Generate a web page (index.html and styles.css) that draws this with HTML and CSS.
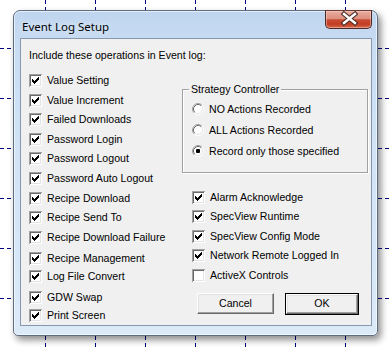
FILE: index.html
```html
<!DOCTYPE html>
<html>
<head>
<meta charset="utf-8">
<title>Event Log Setup</title>
<link rel="stylesheet" href="styles.css">
</head>
<body>
<div class="desk">
  <svg class="grid" width="392" height="347" viewBox="0 0 392 347">
    <g stroke="#000080" stroke-width="1" stroke-dasharray="4 3">
      <path d="M45.5 0V347M95.5 0V347M145.5 0V347M195.5 0V347M245.5 0V347M295.5 0V347M345.5 0V347"/>
      <path d="M0 48.5H392M0 98.5H392M0 148.5H392M0 198.5H392M0 248.5H392M0 298.5H392"/>
    </g>
  </svg>

  <div class="window">
    <div class="titlebar">
      <span class="title">Event Log Setup</span>
      <span class="close">
        <svg width="47" height="19" viewBox="0 0 47 19">
          <path d="M19 4L30 13M30 4L19 13" stroke="#4a2a24" stroke-width="4.6" stroke-linecap="square"/>
          <path d="M19 4L30 13M30 4L19 13" stroke="#ffffff" stroke-width="2.4" stroke-linecap="square"/>
        </svg>
      </span>
    </div>

    <div class="client">
      <div class="intro">Include these operations in Event log:</div>
      <div class="cols">
        <div class="col-left">
          <div class="row h20">
            <svg class="cb" width="13" height="13" viewBox="0 0 13 13"><rect width="13" height="13" fill="#fff"/><path d="M0 0h13v1H1v12H0z" fill="#a0a0a0"/><path d="M1 1h11v1H2v10H1z" fill="#696969"/><path d="M11 2h1v10H2v-1h9z" fill="#e3e3e3"/><path d="M9 3h1v1h-1zM8 4h2v1h-2zM3 5h1v1h-1zM7 5h3v1h-3zM3 6h2v1h-2zM6 6h3v1h-3zM3 7h5v1h-5zM4 8h3v1h-3zM5 9h1v1h-1z" fill="#000"/></svg>
            <span>Value Setting</span>
          </div>
          <div class="row h19">
            <svg class="cb" width="13" height="13" viewBox="0 0 13 13"><rect width="13" height="13" fill="#fff"/><path d="M0 0h13v1H1v12H0z" fill="#a0a0a0"/><path d="M1 1h11v1H2v10H1z" fill="#696969"/><path d="M11 2h1v10H2v-1h9z" fill="#e3e3e3"/><path d="M9 3h1v1h-1zM8 4h2v1h-2zM3 5h1v1h-1zM7 5h3v1h-3zM3 6h2v1h-2zM6 6h3v1h-3zM3 7h5v1h-5zM4 8h3v1h-3zM5 9h1v1h-1z" fill="#000"/></svg>
            <span>Value Increment</span>
          </div>
          <div class="row h20">
            <svg class="cb" width="13" height="13" viewBox="0 0 13 13"><rect width="13" height="13" fill="#fff"/><path d="M0 0h13v1H1v12H0z" fill="#a0a0a0"/><path d="M1 1h11v1H2v10H1z" fill="#696969"/><path d="M11 2h1v10H2v-1h9z" fill="#e3e3e3"/><path d="M9 3h1v1h-1zM8 4h2v1h-2zM3 5h1v1h-1zM7 5h3v1h-3zM3 6h2v1h-2zM6 6h3v1h-3zM3 7h5v1h-5zM4 8h3v1h-3zM5 9h1v1h-1z" fill="#000"/></svg>
            <span>Failed Downloads</span>
          </div>
          <div class="row h19">
            <svg class="cb" width="13" height="13" viewBox="0 0 13 13"><rect width="13" height="13" fill="#fff"/><path d="M0 0h13v1H1v12H0z" fill="#a0a0a0"/><path d="M1 1h11v1H2v10H1z" fill="#696969"/><path d="M11 2h1v10H2v-1h9z" fill="#e3e3e3"/><path d="M9 3h1v1h-1zM8 4h2v1h-2zM3 5h1v1h-1zM7 5h3v1h-3zM3 6h2v1h-2zM6 6h3v1h-3zM3 7h5v1h-5zM4 8h3v1h-3zM5 9h1v1h-1z" fill="#000"/></svg>
            <span>Password Login</span>
          </div>
          <div class="row h20">
            <svg class="cb" width="13" height="13" viewBox="0 0 13 13"><rect width="13" height="13" fill="#fff"/><path d="M0 0h13v1H1v12H0z" fill="#a0a0a0"/><path d="M1 1h11v1H2v10H1z" fill="#696969"/><path d="M11 2h1v10H2v-1h9z" fill="#e3e3e3"/><path d="M9 3h1v1h-1zM8 4h2v1h-2zM3 5h1v1h-1zM7 5h3v1h-3zM3 6h2v1h-2zM6 6h3v1h-3zM3 7h5v1h-5zM4 8h3v1h-3zM5 9h1v1h-1z" fill="#000"/></svg>
            <span>Password Logout</span>
          </div>
          <div class="row h20">
            <svg class="cb" width="13" height="13" viewBox="0 0 13 13"><rect width="13" height="13" fill="#fff"/><path d="M0 0h13v1H1v12H0z" fill="#a0a0a0"/><path d="M1 1h11v1H2v10H1z" fill="#696969"/><path d="M11 2h1v10H2v-1h9z" fill="#e3e3e3"/><path d="M9 3h1v1h-1zM8 4h2v1h-2zM3 5h1v1h-1zM7 5h3v1h-3zM3 6h2v1h-2zM6 6h3v1h-3zM3 7h5v1h-5zM4 8h3v1h-3zM5 9h1v1h-1z" fill="#000"/></svg>
            <span>Password Auto Logout</span>
          </div>
          <div class="row h19">
            <svg class="cb" width="13" height="13" viewBox="0 0 13 13"><rect width="13" height="13" fill="#fff"/><path d="M0 0h13v1H1v12H0z" fill="#a0a0a0"/><path d="M1 1h11v1H2v10H1z" fill="#696969"/><path d="M11 2h1v10H2v-1h9z" fill="#e3e3e3"/><path d="M9 3h1v1h-1zM8 4h2v1h-2zM3 5h1v1h-1zM7 5h3v1h-3zM3 6h2v1h-2zM6 6h3v1h-3zM3 7h5v1h-5zM4 8h3v1h-3zM5 9h1v1h-1z" fill="#000"/></svg>
            <span>Recipe Download</span>
          </div>
          <div class="row h20">
            <svg class="cb" width="13" height="13" viewBox="0 0 13 13"><rect width="13" height="13" fill="#fff"/><path d="M0 0h13v1H1v12H0z" fill="#a0a0a0"/><path d="M1 1h11v1H2v10H1z" fill="#696969"/><path d="M11 2h1v10H2v-1h9z" fill="#e3e3e3"/><path d="M9 3h1v1h-1zM8 4h2v1h-2zM3 5h1v1h-1zM7 5h3v1h-3zM3 6h2v1h-2zM6 6h3v1h-3zM3 7h5v1h-5zM4 8h3v1h-3zM5 9h1v1h-1z" fill="#000"/></svg>
            <span>Recipe Send To</span>
          </div>
          <div class="row h21">
            <svg class="cb" width="13" height="13" viewBox="0 0 13 13"><rect width="13" height="13" fill="#fff"/><path d="M0 0h13v1H1v12H0z" fill="#a0a0a0"/><path d="M1 1h11v1H2v10H1z" fill="#696969"/><path d="M11 2h1v10H2v-1h9z" fill="#e3e3e3"/><path d="M9 3h1v1h-1zM8 4h2v1h-2zM3 5h1v1h-1zM7 5h3v1h-3zM3 6h2v1h-2zM6 6h3v1h-3zM3 7h5v1h-5zM4 8h3v1h-3zM5 9h1v1h-1z" fill="#000"/></svg>
            <span>Recipe Download Failure</span>
          </div>
          <div class="row h18">
            <svg class="cb" width="13" height="13" viewBox="0 0 13 13"><rect width="13" height="13" fill="#fff"/><path d="M0 0h13v1H1v12H0z" fill="#a0a0a0"/><path d="M1 1h11v1H2v10H1z" fill="#696969"/><path d="M11 2h1v10H2v-1h9z" fill="#e3e3e3"/><path d="M9 3h1v1h-1zM8 4h2v1h-2zM3 5h1v1h-1zM7 5h3v1h-3zM3 6h2v1h-2zM6 6h3v1h-3zM3 7h5v1h-5zM4 8h3v1h-3zM5 9h1v1h-1z" fill="#000"/></svg>
            <span>Recipe Management</span>
          </div>
          <div class="row h21">
            <svg class="cb" width="13" height="13" viewBox="0 0 13 13"><rect width="13" height="13" fill="#fff"/><path d="M0 0h13v1H1v12H0z" fill="#a0a0a0"/><path d="M1 1h11v1H2v10H1z" fill="#696969"/><path d="M11 2h1v10H2v-1h9z" fill="#e3e3e3"/><path d="M9 3h1v1h-1zM8 4h2v1h-2zM3 5h1v1h-1zM7 5h3v1h-3zM3 6h2v1h-2zM6 6h3v1h-3zM3 7h5v1h-5zM4 8h3v1h-3zM5 9h1v1h-1z" fill="#000"/></svg>
            <span>Log File Convert</span>
          </div>
          <div class="row h18">
            <svg class="cb" width="13" height="13" viewBox="0 0 13 13"><rect width="13" height="13" fill="#fff"/><path d="M0 0h13v1H1v12H0z" fill="#a0a0a0"/><path d="M1 1h11v1H2v10H1z" fill="#696969"/><path d="M11 2h1v10H2v-1h9z" fill="#e3e3e3"/><path d="M9 3h1v1h-1zM8 4h2v1h-2zM3 5h1v1h-1zM7 5h3v1h-3zM3 6h2v1h-2zM6 6h3v1h-3zM3 7h5v1h-5zM4 8h3v1h-3zM5 9h1v1h-1z" fill="#000"/></svg>
            <span>GDW Swap</span>
          </div>
          <div class="row last">
            <svg class="cb" width="13" height="13" viewBox="0 0 13 13"><rect width="13" height="13" fill="#fff"/><path d="M0 0h13v1H1v12H0z" fill="#a0a0a0"/><path d="M1 1h11v1H2v10H1z" fill="#696969"/><path d="M11 2h1v10H2v-1h9z" fill="#e3e3e3"/><path d="M9 3h1v1h-1zM8 4h2v1h-2zM3 5h1v1h-1zM7 5h3v1h-3zM3 6h2v1h-2zM6 6h3v1h-3zM3 7h5v1h-5zM4 8h3v1h-3zM5 9h1v1h-1z" fill="#000"/></svg>
            <span>Print Screen</span>
          </div>
        </div>

        <div class="col-right">
          <div class="group">
            <div class="legend"><span>Strategy Controller</span></div>
            <div class="radios">
              <div class="row rr21">
                <svg class="rb" width="12" height="12" viewBox="0 0 12 12"><circle cx="6" cy="6" r="5" fill="#fff"/><path d="M2.11 9.89A5.5 5.5 0 0 1 9.89 2.11" fill="none" stroke="#a0a0a0"/><path d="M9.89 2.11A5.5 5.5 0 0 1 2.11 9.89" fill="none" stroke="#fff"/><path d="M2.82 9.18A4.5 4.5 0 0 1 9.18 2.82" fill="none" stroke="#696969"/><path d="M9.18 2.82A4.5 4.5 0 0 1 2.82 9.18" fill="none" stroke="#e3e3e3"/></svg>
                <span>NO Actions Recorded</span>
              </div>
              <div class="row rr21">
                <svg class="rb" width="12" height="12" viewBox="0 0 12 12"><circle cx="6" cy="6" r="5" fill="#fff"/><path d="M2.11 9.89A5.5 5.5 0 0 1 9.89 2.11" fill="none" stroke="#a0a0a0"/><path d="M9.89 2.11A5.5 5.5 0 0 1 2.11 9.89" fill="none" stroke="#fff"/><path d="M2.82 9.18A4.5 4.5 0 0 1 9.18 2.82" fill="none" stroke="#696969"/><path d="M9.18 2.82A4.5 4.5 0 0 1 2.82 9.18" fill="none" stroke="#e3e3e3"/></svg>
                <span>ALL Actions Recorded</span>
              </div>
              <div class="row rlast">
                <svg class="rb" width="12" height="12" viewBox="0 0 12 12"><circle cx="6" cy="6" r="5" fill="#fff"/><path d="M2.11 9.89A5.5 5.5 0 0 1 9.89 2.11" fill="none" stroke="#a0a0a0"/><path d="M9.89 2.11A5.5 5.5 0 0 1 2.11 9.89" fill="none" stroke="#fff"/><path d="M2.82 9.18A4.5 4.5 0 0 1 9.18 2.82" fill="none" stroke="#696969"/><path d="M9.18 2.82A4.5 4.5 0 0 1 2.82 9.18" fill="none" stroke="#e3e3e3"/><rect x="4" y="4" width="4" height="4" rx="1" fill="#000"/></svg>
                <span>Record only those specified</span>
              </div>
            </div>
          </div>

          <div class="checks">
            <div class="row h19">
              <svg class="cb" width="13" height="13" viewBox="0 0 13 13"><rect width="13" height="13" fill="#fff"/><path d="M0 0h13v1H1v12H0z" fill="#a0a0a0"/><path d="M1 1h11v1H2v10H1z" fill="#696969"/><path d="M11 2h1v10H2v-1h9z" fill="#e3e3e3"/><path d="M9 3h1v1h-1zM8 4h2v1h-2zM3 5h1v1h-1zM7 5h3v1h-3zM3 6h2v1h-2zM6 6h3v1h-3zM3 7h5v1h-5zM4 8h3v1h-3zM5 9h1v1h-1z" fill="#000"/></svg>
              <span>Alarm Acknowledge</span>
            </div>
            <div class="row h20">
              <svg class="cb" width="13" height="13" viewBox="0 0 13 13"><rect width="13" height="13" fill="#fff"/><path d="M0 0h13v1H1v12H0z" fill="#a0a0a0"/><path d="M1 1h11v1H2v10H1z" fill="#696969"/><path d="M11 2h1v10H2v-1h9z" fill="#e3e3e3"/><path d="M9 3h1v1h-1zM8 4h2v1h-2zM3 5h1v1h-1zM7 5h3v1h-3zM3 6h2v1h-2zM6 6h3v1h-3zM3 7h5v1h-5zM4 8h3v1h-3zM5 9h1v1h-1z" fill="#000"/></svg>
              <span>SpecView Runtime</span>
            </div>
            <div class="row h19">
              <svg class="cb" width="13" height="13" viewBox="0 0 13 13"><rect width="13" height="13" fill="#fff"/><path d="M0 0h13v1H1v12H0z" fill="#a0a0a0"/><path d="M1 1h11v1H2v10H1z" fill="#696969"/><path d="M11 2h1v10H2v-1h9z" fill="#e3e3e3"/><path d="M9 3h1v1h-1zM8 4h2v1h-2zM3 5h1v1h-1zM7 5h3v1h-3zM3 6h2v1h-2zM6 6h3v1h-3zM3 7h5v1h-5zM4 8h3v1h-3zM5 9h1v1h-1z" fill="#000"/></svg>
              <span>SpecView Config Mode</span>
            </div>
            <div class="row h20">
              <svg class="cb" width="13" height="13" viewBox="0 0 13 13"><rect width="13" height="13" fill="#fff"/><path d="M0 0h13v1H1v12H0z" fill="#a0a0a0"/><path d="M1 1h11v1H2v10H1z" fill="#696969"/><path d="M11 2h1v10H2v-1h9z" fill="#e3e3e3"/><path d="M9 3h1v1h-1zM8 4h2v1h-2zM3 5h1v1h-1zM7 5h3v1h-3zM3 6h2v1h-2zM6 6h3v1h-3zM3 7h5v1h-5zM4 8h3v1h-3zM5 9h1v1h-1z" fill="#000"/></svg>
              <span>Network Remote Logged In</span>
            </div>
            <div class="row last">
              <svg class="cb" width="13" height="13" viewBox="0 0 13 13"><rect width="13" height="13" fill="#fff"/><path d="M0 0h13v1H1v12H0z" fill="#a0a0a0"/><path d="M1 1h11v1H2v10H1z" fill="#696969"/><path d="M11 2h1v10H2v-1h9z" fill="#e3e3e3"/></svg>
              <span>ActiveX Controls</span>
            </div>
          </div>

          <div class="buttons">
            <div class="btn cancel"><span>Cancel</span></div>
            <div class="btn-default"><div class="btn ok"><span>OK</span></div></div>
          </div>
        </div>
      </div>
    </div>
  </div>
</div>
</body>
</html>
```

FILE: styles.css
```css
html, body {
  margin: 0;
  padding: 0;
  background: #ffffff;
}

.desk {
  position: relative;
  width: 392px;
  height: 347px;
  overflow: hidden;
  box-sizing: border-box;
  padding: 10px 0 0 13px;
  background: #ffffff;
}

.grid {
  position: absolute;
  left: 0;
  top: 0;
  display: block;
}

.window {
  position: relative;
  box-sizing: border-box;
  width: 365px;
  height: 326px;
  border: 1px solid #5d6d82;
  border-radius: 7px 7px 5px 5px;
  padding: 0 5px 9px 6px;
  background: linear-gradient(180deg, #bfd5ef 0%, #c9ddf3 12%, #d2e3f6 45%, #dceaf8 100%);
  box-shadow: inset 0 0 0 1px rgba(255, 255, 255, 0.6), 3px 4px 7px rgba(0, 0, 0, 0.45);
}

.titlebar {
  display: flex;
  align-items: flex-start;
  justify-content: space-between;
  height: 27px;
}

.title {
  font-family: "Noto Sans", "Open Sans", sans-serif;
  font-size: 11.5px;
  line-height: 14px;
  color: #000000;
  margin: 9px 0 0 2px;
  text-shadow: 0 0 6px rgba(255, 255, 255, 0.9);
}

.close {
  display: block;
  width: 47px;
  height: 19px;
  margin-top: -1px;
  box-sizing: border-box;
  border: 1px solid #4d2a25;
  border-top-color: #6b3a33;
  border-radius: 0 0 5px 5px;
  background: linear-gradient(180deg, #e8ac9f 0%, #dc8e7e 45%, #c94a32 52%, #c23e25 78%, #d26a4e 100%);
  box-shadow: inset 0 0 0 1px rgba(255, 220, 210, 0.45);
  overflow: hidden;
}

.close svg {
  display: block;
  margin: -1px 0 0 -1px;
}

.client {
  box-sizing: border-box;
  width: 352px;
  height: 288px;
  border: 1px solid #8797ad;
  background: #f0f0f0;
  font-family: "Liberation Sans", Arial, sans-serif;
  font-size: 10.6px;
  color: #000000;
  padding: 10px 0 0 8px;
}

.intro {
  line-height: 13px;
  height: 13px;
}

.cols {
  display: flex;
  margin-top: 12px;
}

.col-left {
  width: 153px;
  display: flex;
  flex-direction: column;
}

.row {
  display: flex;
  align-items: flex-start;
  height: 20px;
  line-height: 13px;
  white-space: nowrap;
}

.row.h18 { height: 18px; }
.row.h19 { height: 19px; }
.row.h20 { height: 20px; }
.row.h21 { height: 21px; }
.row.last { height: 13px; }

.cb {
  display: block;
  flex: none;
  margin-right: 5px;
}

.rb {
  display: block;
  flex: none;
  margin-right: 5px;
}

.row span {
  display: block;
  height: 13px;
}

.col-right {
  width: 187px;
  display: flex;
  flex-direction: column;
}

.group {
  margin-top: 15px;
  box-sizing: border-box;
  width: 186px;
  height: 84px;
  border: 1px solid #a0a0a0;
  box-shadow: inset 1px 1px 0 #ffffff, 1px 1px 0 #ffffff;
}

.legend {
  display: flex;
  margin-top: -7px;
  height: 13px;
  line-height: 13px;
  padding-left: 6px;
}

.legend span {
  background: #f0f0f0;
  padding: 0 2px;
}

.radios {
  margin-top: 7px;
  padding-left: 9px;
  display: flex;
  flex-direction: column;
}

.radios .row {
  height: 20px;
  line-height: 12px;
}

.radios .row.rr21 { height: 21px; }
.radios .row.rlast { height: 12px; }
.radios .row span { height: 12px; }

.checks {
  margin-top: 18px;
  padding-left: 10px;
  display: flex;
  flex-direction: column;
}

.buttons {
  display: flex;
  margin-top: 11px;
  padding-left: 15px;
  gap: 11px;
}

.btn {
  box-sizing: border-box;
  display: flex;
  align-items: center;
  justify-content: center;
  height: 21px;
  background: #f0f0f0;
  border: 1px solid;
  border-color: #ffffff #696969 #696969 #ffffff;
  box-shadow: inset -1px -1px 0 #a0a0a0, inset 1px 1px 0 #e3e3e3;
  line-height: 13px;
}

.btn span {
  display: block;
  margin-top: -1px;
}

.cancel {
  width: 77px;
}

.btn-default {
  box-sizing: border-box;
  width: 74px;
  height: 22px;
  border: 1px solid #000000;
}

.ok {
  width: 72px;
  height: 20px;
}
```
